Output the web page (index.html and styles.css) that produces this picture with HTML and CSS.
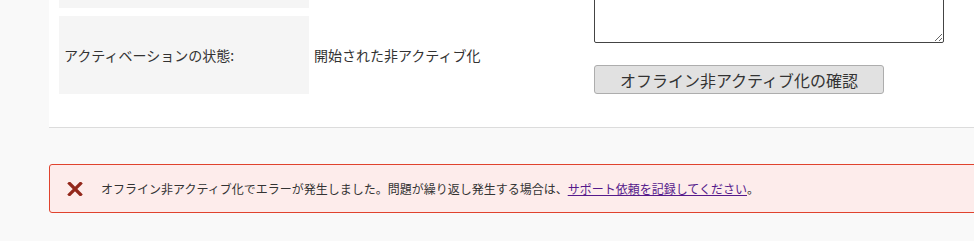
FILE: index.html
```html
<!DOCTYPE html>
<html lang="ja">
<head>
<meta charset="utf-8">
<title>オフライン非アクティブ化</title>
<link rel="stylesheet" href="styles.css">
</head>
<body>
<div class="page">
  <div class="panel">
    <div class="form">
      <div class="rows">
        <div class="row row-prev">
          <div class="label"></div>
          <div class="value"></div>
        </div>
        <div class="row row-status">
          <div class="label">アクティベーションの状態:</div>
          <div class="value">開始された非アクティブ化</div>
        </div>
      </div>
      <div class="side">
        <textarea class="notes"></textarea>
        <button class="confirm" type="button">オフライン非アクティブ化の確認</button>
      </div>
    </div>
  </div>
  <div class="alert">
    <svg class="alert-icon" width="16" height="14" viewBox="0 0 16 14" aria-hidden="true">
      <path d="M2.5 1.5 L13.5 12.5 M13.5 1.5 L2.5 12.5" stroke="#93281c" stroke-width="3.2" stroke-linecap="square" fill="none"/>
    </svg>
    <span class="alert-text">オフライン非アクティブ化でエラーが発生しました。問題が繰り返し発生する場合は、<a href="#" class="alert-link">サポート依頼を記録してください</a>。</span>
  </div>
</div>
</body>
</html>
```

FILE: styles.css
```css
html, body {
  margin: 0;
  padding: 0;
}
body {
  background: #f9f9f9;
  font-family: "Noto Sans CJK JP", "Noto Sans", "Liberation Sans", sans-serif;
  color: #333;
  overflow: hidden;
}
.page {
  padding-left: 49px;
}
.panel {
  background: #fff;
  border-bottom: 1px solid #dcdcdc;
  margin-top: -60px;
}
.form {
  display: flex;
  padding: 0 0 33px 10px;
}
.rows {
  width: 535px;
  display: flex;
  flex-direction: column;
  gap: 8px;
}
.row {
  display: flex;
  align-items: stretch;
}
.row-prev {
  height: 68px;
}
.row-status {
  height: 78px;
}
.label {
  width: 250px;
  background: #f5f5f5;
  box-sizing: border-box;
  padding-left: 5px;
  display: flex;
  align-items: center;
  font-size: 14px;
  line-height: 20px;
}
.value {
  padding-left: 5px;
  display: flex;
  align-items: center;
  font-size: 14px;
  line-height: 20px;
}
.side {
  display: flex;
  flex-direction: column;
  align-items: flex-start;
}
.notes {
  width: 350px;
  height: 103px;
  box-sizing: border-box;
  border: 1px solid #444;
  border-radius: 2px;
  margin: 0;
  background: #fff;
}
.confirm {
  margin-top: 22px;
  width: 290px;
  height: 29px;
  box-sizing: border-box;
  background: #e1e1e1;
  border: 1px solid #adadad;
  border-radius: 3px;
  font-family: inherit;
  font-size: 16px;
  line-height: 20px;
  color: #333;
  padding: 0;
}
.alert {
  margin-top: 36px;
  width: 960px;
  height: 49px;
  box-sizing: border-box;
  background: #fdeceb;
  border: 1px solid #e0432e;
  border-radius: 3px;
  display: flex;
  align-items: center;
  padding-left: 17px;
}
.alert-icon {
  flex: none;
  display: block;
}
.alert-text {
  margin-left: 18px;
  font-size: 12px;
  line-height: 16px;
  color: #333;
  white-space: nowrap;
}
.alert-link {
  color: #551a8b;
  text-decoration: underline;
}
```
